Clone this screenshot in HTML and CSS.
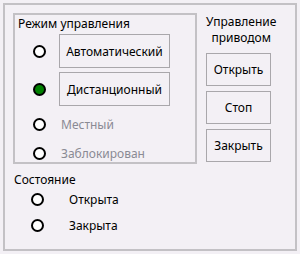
FILE: index.html
```html
<!DOCTYPE html>
<html lang="ru">
    <head>
        <meta charset="UTF-8" />
        <title>Управление приводом</title>
        <link rel="stylesheet" href="styles.css">
    </head>
    <body>
        <div class="frame">
            <div class="top">
                <!-- режим управления -->
                <div class="group">
                    <div class="title">Режим управления</div>
                    <div class="row r1">
                        <span class="radio"></span>
                        <button class="btn wide">Автоматический</button>
                    </div>
                    <div class="row r2">
                        <span class="radio on"></span>
                        <button class="btn wide">Дистанционный</button>
                    </div>
                    <div class="row r3">
                        <span class="radio"></span>
                        <span class="lbl off">Местный</span>
                    </div>
                    <div class="row r4">
                        <span class="radio"></span>
                        <span class="lbl off">Заблокирован</span>
                    </div>
                </div>

                <!-- управление приводом -->
                <div class="drive">
                    <div class="dtitle">Управление<br>приводом</div>
                    <button class="btn side">Открыть</button>
                    <button class="btn side">Стоп</button>
                    <button class="btn side">Закрыть</button>
                </div>
            </div>

            <!-- состояние -->
            <div class="state">
                <div class="stitle">Состояние</div>
                <div class="srow">
                    <span class="radio"></span>
                    <span class="lbl">Открыта</span>
                </div>
                <div class="srow">
                    <span class="radio"></span>
                    <span class="lbl">Закрыта</span>
                </div>
            </div>
        </div>
    </body>
</html>
```

FILE: styles.css
```css
html,
body {
    margin: 0;
    padding: 0;
    background: #f3f0f5;
}
body {
    padding: 3px;
    font-family: "Noto Sans", "Open Sans", sans-serif;
    font-size: 12px;
    color: #000;
}
/* внешняя рамка */
.frame {
    box-sizing: border-box;
    width: 294px;
    height: 248px;
    border: 2px solid #c3c1c5;
}
.top {
    display: flex;
    padding: 8px 0 0 8px;
}
/* группа режимов */
.group {
    box-sizing: border-box;
    width: 184px;
    height: 151px;
    border: 2px solid #c3c1c5;
}
.title {
    height: 19px;
    padding-left: 3px;
    line-height: 17px;
}
.row {
    display: flex;
    align-items: center;
    height: 34px;
}
.r2 {
    margin-top: 4px;
}
.r3 {
    height: 36px;
}
.r4 {
    height: 22px;
}
.radio {
    box-sizing: border-box;
    flex: none;
    width: 13px;
    height: 13px;
    margin: 0 13px 0 18px;
    border: 2px solid #000;
    border-radius: 50%;
    background: #fff;
}
.radio.on {
    background: #008000;
}
.lbl {
    margin-left: 2px;
}
.lbl.off {
    color: #8a8a94;
}
/* кнопки */
.btn {
    box-sizing: border-box;
    margin: 0;
    padding: 0;
    border: 1px solid #a9a7ab;
    background: #f3f0f5;
    font: inherit;
    color: #000;
}
.wide {
    width: 111px;
    height: 34px;
}
.side {
    display: block;
    width: 65px;
    height: 33px;
    margin-top: 5px;
}
/* управление приводом */
.drive {
    margin-left: 9px;
}
.dtitle {
    box-sizing: border-box;
    height: 40px;
    padding-top: 1px;
    text-align: center;
    line-height: 16px;
}
.drive .side:first-of-type {
    margin-top: 0;
}
/* состояние */
.state {
    padding-top: 10px;
}
.stitle {
    height: 12px;
    padding-left: 9px;
    line-height: 12px;
}
.srow {
    display: flex;
    align-items: center;
    height: 26px;
}
.srow .radio {
    margin-left: 26px;
}
.srow .lbl {
    margin-left: 12px;
}
```
